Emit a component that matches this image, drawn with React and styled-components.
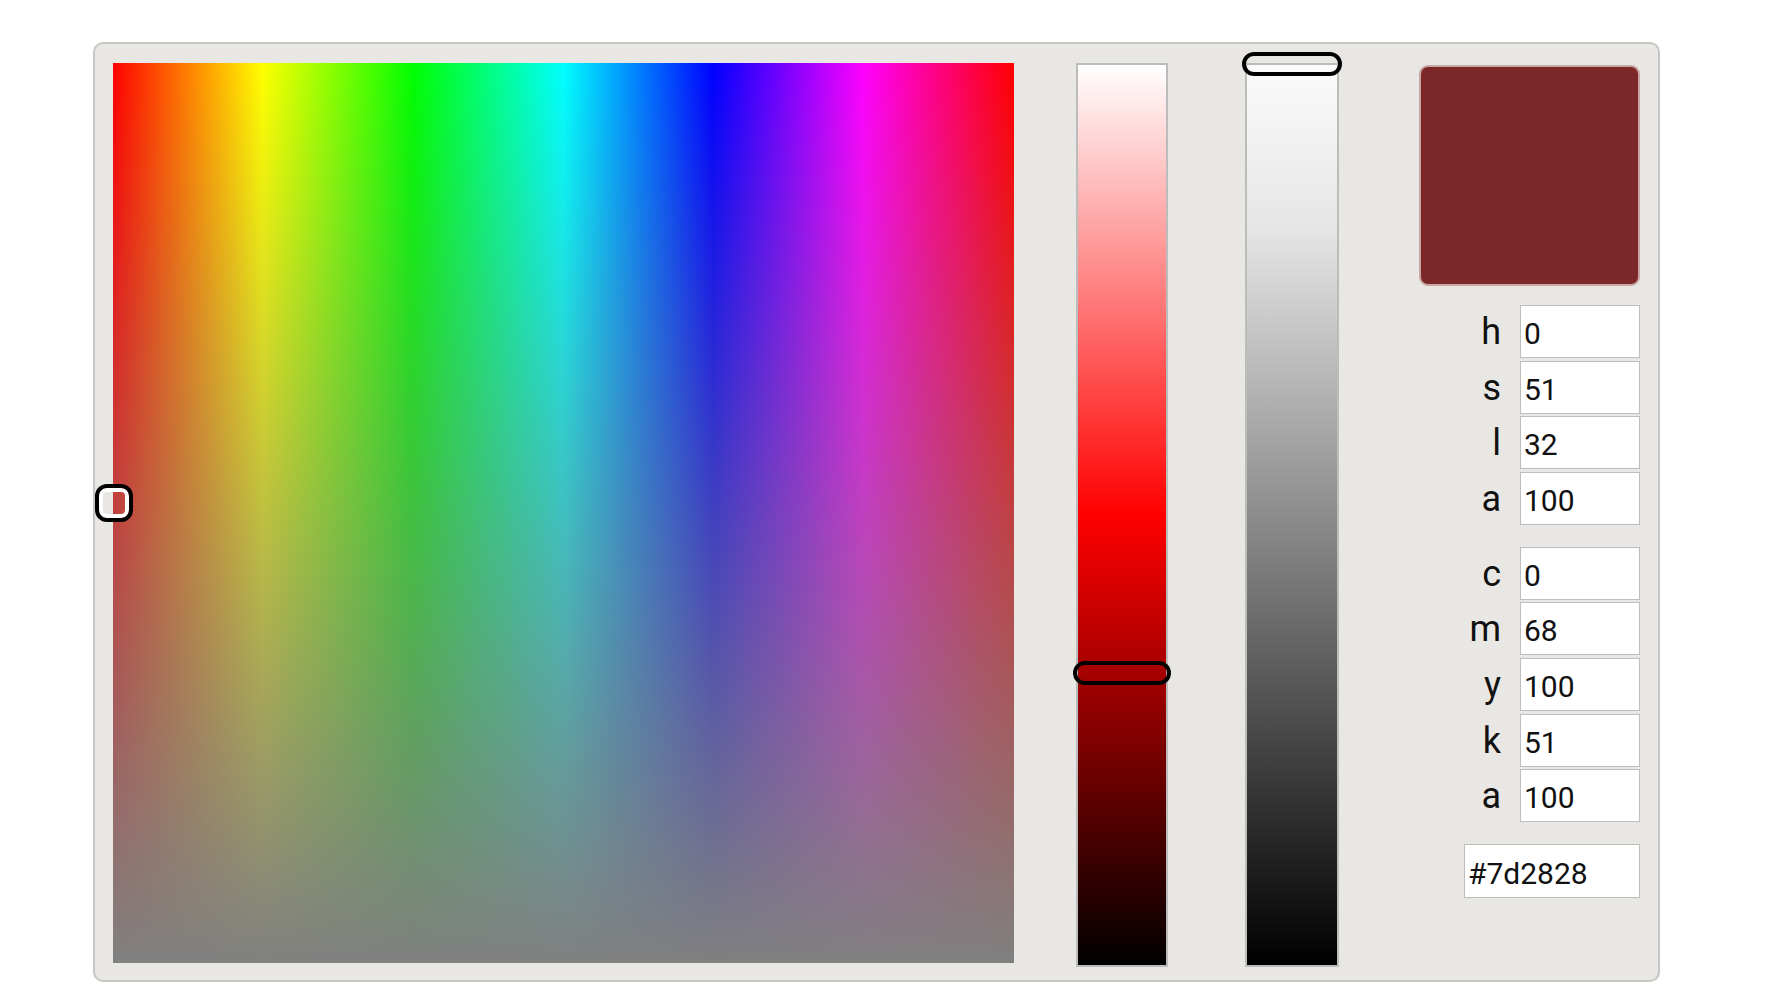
import React from 'react'
import styled, { createGlobalStyle } from 'styled-components'

const GlobalStyle = createGlobalStyle`
  html, body {
    margin: 0;
    padding: 0;
    background: #fff;
  }
  body {
    font-family: Roboto, "Noto Sans", "Liberation Sans", sans-serif;
  }
  * {
    box-sizing: border-box;
  }
`

const Panel = styled.div`
  display: flex;
  align-items: flex-start;

  width: 1567px;
  height: 940px;
  margin: 42px 0 0 93px;
  padding: 19px 18px 0 18px;

  background: #e9e7e3; /* warm light grey */
  border: 2px solid #c6c6c4;
  border-radius: 10px;
`

const Field = styled.div`
  position: relative;
  flex: none;

  width: 901px;
  height: 900px;

  background:
    linear-gradient(to bottom, rgba(128, 128, 128, 0), #808080),
    linear-gradient(to right, #f00 0%, #ff0 16.6%, #0f0 33.3%, #0ff 50%, #00f 66.6%, #f0f 83.3%, #f00 100%);
`

const FieldHandle = styled.div`
  position: absolute;

  width: 38px;
  height: 38px;

  border: 4px solid #000;
  border-radius: 12px;
  box-shadow: inset 0 0 0 4px #fff;
`

const Track = styled.div`
  position: relative;
  flex: none;

  width: ${props => props.$width}px;
  height: 904px;
  margin-left: ${props => props.$gap}px;

  background: ${props => props.$fill};
  border: 2px solid #bcbcbc;
`

const TrackHandle = styled.div`
  position: absolute;
  left: -5px;

  width: ${props => props.$width}px;
  height: 24px;

  border: 4px solid #000;
  border-radius: 12px;
`

const Side = styled.div`
  display: flex;
  flex: none;
  flex-direction: column;
  align-items: flex-end;

  width: 221px;
  margin: 2px 0 0 80px;
`

const Swatch = styled.div`
  width: 221px;
  height: 221px;
  margin-bottom: 19px;

  background: ${props => props.$color};
  border: 2px solid #c9a6a6;
  border-radius: 9px;
`

const Fields = styled.div`
  display: grid;
  grid-template-columns: 1fr 120px;
  grid-auto-rows: 53px;
  column-gap: 19px;
  row-gap: 2.6px;

  width: 100%;
  margin-bottom: 22px;
`

const Label = styled.label`
  display: flex;
  align-items: center;
  justify-content: flex-end;

  padding-top: 1px;

  color: #111;
  font-size: 36px;
  line-height: 1;
`

const Input = styled.input`
  width: ${props => props.$width || 120}px;
  height: ${props => props.$height || 53}px;
  margin: 0;
  padding: 4px 0 0 3px;

  background: #fff;
  border: 1px solid #bdbdbd;
  border-radius: 0;
  outline: none;

  color: #111;
  font-family: Roboto, "Noto Sans", "Liberation Sans", sans-serif;
  font-size: 30px;
`

const hsla = [['h', '0'], ['s', '51'], ['l', '32'], ['a', '100']]
const cmyk = [['c', '0'], ['m', '68'], ['y', '100'], ['k', '51'], ['a', '100']]

const FieldGroup = ({ rows }) => (
  <Fields>
    {rows.map(([name, value], i) => (
      <React.Fragment key={name + i}>
        <Label>{name}</Label>
        <Input defaultValue={value} />
      </React.Fragment>
    ))}
  </Fields>
)

const App = () => {
  const hue = 0
  const saturation = 51
  const lightness = 32

  return (
    <>
      <GlobalStyle />
      <Panel>
        <Field>
          <FieldHandle style={{ left: (hue / 360) * 901 - 18, top: (1 - saturation / 100) * 900 - 20 }} />
        </Field>
        <Track $width={92} $gap={62} $fill="linear-gradient(to bottom, #fff 0%, #f00 50%, #000 100%)">
          <TrackHandle $width={98} style={{ top: (1 - lightness / 100) * 900 - 16 }} />
        </Track>
        <Track $width={94} $gap={77} $fill="linear-gradient(to bottom, #fbfbfb 0%, #e6e6e6 18%, #000 100%)">
          <TrackHandle $width={100} style={{ top: -13 }} />
        </Track>
        <Side>
          <Swatch $color="#7d2828" />
          <FieldGroup rows={hsla} />
          <FieldGroup rows={cmyk} />
          <Input $width={176} $height={54} defaultValue="#7d2828" />
        </Side>
      </Panel>
    </>
  )
}

export default App
